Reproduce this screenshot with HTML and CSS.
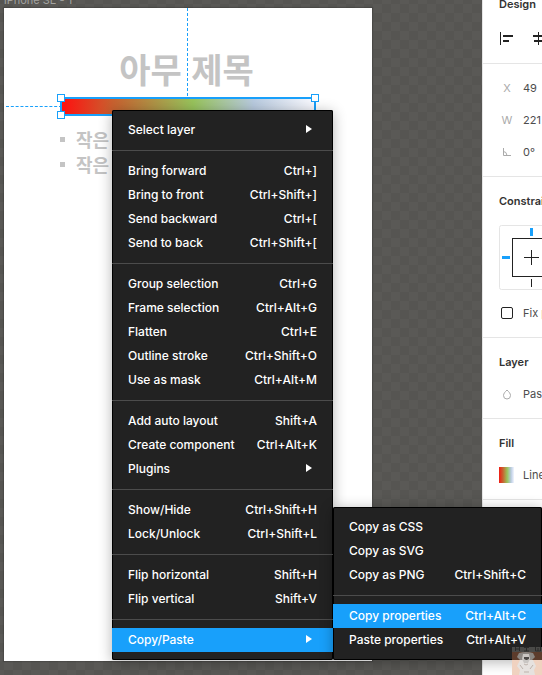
FILE: index.html
```html
<!DOCTYPE html>
<html lang="en">
<head>
<meta charset="utf-8">
<title>Design editor</title>
<link rel="stylesheet" href="styles.css">
</head>
<body>
<div class="app">
  <main class="canvas">
    <div class="frame-label">iPhone SE - 1</div>
    <section class="frame">
      <h1 class="heading" lang="ko">아무 제목</h1>
      <div class="selection">
        <i class="handle handle-tl"></i><i class="handle handle-tr"></i><i class="handle handle-bl"></i>
        <i class="guide-x"></i>
      </div>
      <ul class="notes" lang="ko"><li>작은</li><li>작은</li></ul>
      <i class="guide-y"></i>
    </section>
  </main>
  <aside class="panel">
    <section class="block block-design">
      <h2 class="title">Design</h2>
      <div class="aligns">
        <button class="icon-button" type="button" aria-label="Align left"><svg width="16" height="16" viewBox="0 0 16 16"><path d="M1.5 2v13" stroke="#222" fill="none"/><path d="M4 6h10M4 11h6" stroke="#222" stroke-width="2"/></svg></button>
        <button class="icon-button" type="button" aria-label="Align horizontal centers"><svg width="16" height="16" viewBox="0 0 16 16"><path d="M7.5 2v13" stroke="#222" fill="none"/><path d="M2 6h11M3 11h9" stroke="#222" stroke-width="2"/></svg></button>
      </div>
    </section>
    <section class="block">
      <label class="field"><span class="mark">X</span><input class="value" value="49"></label>
      <label class="field"><span class="mark">W</span><input class="value" value="221"></label>
      <label class="field"><span class="mark"><svg width="10" height="10" viewBox="0 0 10 10" fill="none" stroke="#aaa"><path d="M1.500 1v7.500H9M1.500 4.500q3 0 3.500 4"/></svg></span><input class="value" value="0°" aria-label="Rotation"></label>
    </section>
    <section class="block">
      <h2 class="title">Constraints</h2>
      <svg class="constraints" width="65" height="65" viewBox="0 0 65 65" fill="none"><rect x=".5" y=".5" width="64" height="64" rx="2" stroke="#e5e5e5"/><rect x="13.500" y="13.500" width="38" height="38" stroke="#222"/><path d="M32.500 25v15M25 32.500h15M32.500 54v8M54 32.500h8" stroke="#222"/><path d="M32.500 3v8M3 32.500h8" stroke="#18a0fb" stroke-width="3"/></svg>
      <label class="check"><input class="box" type="checkbox"><span>Fix position when scrolling</span></label>
    </section>
    <section class="block">
      <h2 class="title">Layer</h2>
      <div class="field"><span class="mark"><svg width="10" height="11" viewBox="0 0 10 11" fill="none" stroke="#aaa"><path d="M5 1C3 3 1.500 4.500 1.500 6.500a3.500 3.500 0 0 0 7 0C8.500 4.500 7 3 5 1z"/></svg></span><span>Pass through</span></div>
    </section>
    <section class="block">
      <h2 class="title">Fill</h2>
      <div class="field"><span class="swatch"></span><span>Linear</span></div>
    </section>
  </aside>
</div>
<nav class="menu menu-main" aria-label="Context menu">
  <div class="group"><button class="item" type="button">Select layer<i class="arrow"></i></button></div>
  <div class="group">
    <button class="item" type="button">Bring forward<span>Ctrl+]</span></button>
    <button class="item" type="button">Bring to front<span>Ctrl+Shift+]</span></button>
    <button class="item" type="button">Send backward<span>Ctrl+[</span></button>
    <button class="item" type="button">Send to back<span>Ctrl+Shift+[</span></button>
  </div>
  <div class="group">
    <button class="item" type="button">Group selection<span>Ctrl+G</span></button>
    <button class="item" type="button">Frame selection<span>Ctrl+Alt+G</span></button>
    <button class="item" type="button">Flatten<span>Ctrl+E</span></button>
    <button class="item" type="button">Outline stroke<span>Ctrl+Shift+O</span></button>
    <button class="item" type="button">Use as mask<span>Ctrl+Alt+M</span></button>
  </div>
  <div class="group">
    <button class="item" type="button">Add auto layout<span>Shift+A</span></button>
    <button class="item" type="button">Create component<span>Ctrl+Alt+K</span></button>
    <button class="item" type="button">Plugins<i class="arrow"></i></button>
  </div>
  <div class="group">
    <button class="item" type="button">Show/Hide<span>Ctrl+Shift+H</span></button>
    <button class="item" type="button">Lock/Unlock<span>Ctrl+Shift+L</span></button>
  </div>
  <div class="group">
    <button class="item" type="button">Flip horizontal<span>Shift+H</span></button>
    <button class="item" type="button">Flip vertical<span>Shift+V</span></button>
  </div>
  <div class="group"><button class="item active" type="button">Copy/Paste<i class="arrow"></i></button></div>
  <div class="menu menu-sub">
    <div class="group">
      <button class="item" type="button">Copy as CSS</button>
      <button class="item" type="button">Copy as SVG</button>
      <button class="item" type="button">Copy as PNG<span>Ctrl+Shift+C</span></button>
    </div>
    <div class="group">
      <button class="item active" type="button">Copy properties<span>Ctrl+Alt+C</span></button>
      <button class="item" type="button">Paste properties<span>Ctrl+Alt+V</span></button>
    </div>
  </div>
</nav>
<svg class="stamp" width="30" height="28" viewBox="0 0 30 28">
  <path d="M0 0h30v5H0z" fill="#4a4a48"/>
  <path d="M3.500 0v4M7.500 0v4M3 2h4M12 .5h5M14.500 0v4M12 4h5M23.500 0v4h5V0M26 1v3" stroke="#2a2a29" fill="none"/>
  <path d="M0 5h30v8H0z" fill="#5c3c2c"/>
  <path d="M0 13h30v15H0z" fill="#f0d2c0"/>
  <path d="M7 6q7-2 14 0l2 4-3 3H8l-3-3z" fill="#8a8682"/>
  <path d="M8 13h13l3 6-2 4 1 5H7l1-5-3-4z" fill="#e6e2df"/>
  <path d="M11 7h6l1 5-2 4h-4l-2-4z" fill="#c9c6c3"/>
  <path d="M12 10h5v2l-2 1h-1l-2-1z" fill="#4c4947"/>
  <path d="M12 17q2 2 4 0M8 18l3 4M21 18l-3 4M12 25h5" stroke="#bdb3ac" fill="none"/>
</svg>
</body>
</html>
```
FILE: styles.css
```css
* { box-sizing: border-box; }
body { margin: 0; font-family: Inter, "Noto Sans CJK KR", sans-serif; font-size: 11px; color: #4d4d4d; overflow: hidden; }
button, input { font: inherit; color: inherit; border: 0; background: none; margin: 0; padding: 0; }
h1, h2, ul { margin: 0; padding: 0; }
.app { display: grid; grid-template-columns: 1fr 60px; height: 100vh; }
.canvas { display: flex; flex-direction: column; padding: 0 110px 14px 4px; background: conic-gradient(#5a5956 25%, #565552 0 50%, #5a5956 0 75%, #565552 0) 4px 4px / 18px 18px; }
.frame-label { height: 16px; line-height: 16px; margin-top: -8px; color: #a3a3a0; }
.frame { position: relative; flex: 1; background: #fff; box-shadow: 0 0 1px 1px rgba(0, 0, 0, .15); }
.heading { padding: 36px 3px 0 0; text-align: center; font: 700 34px/50px "Noto Sans CJK KR", sans-serif; color: #c4c4c4; }
.selection { position: relative; height: 19px; margin: 3px 56px 0; border: 2px solid #18a0fb; background: linear-gradient(90deg, #ff1010, #c9602f 20%, #98c45c 52%, #b9cbe0 76%, #fafaff); }
.handle { position: absolute; width: 8px; height: 8px; background: #fff; border: 1px solid #18a0fb; }
.handle-tl { left: -5px; top: -5px; }
.handle-tr { right: -5px; top: -5px; }
.handle-bl { left: -5px; bottom: -5px; }
.guide-x { position: absolute; right: 100%; top: 7px; width: 56px; border-top: 1px dashed #18a0fb; }
.guide-y { position: absolute; right: 50%; top: 0; height: 88px; border-left: 1px dashed #18a0fb; }
.notes { list-style: none; padding: 11px 0 0 56px; font: 700 18px/25px "Noto Sans CJK KR", sans-serif; color: #c4c4c4; }
.notes li { display: flex; align-items: center; gap: 11px; }
.notes li::before { content: ""; width: 5px; height: 5px; background: #c4c4c4; }
.panel { overflow: hidden; white-space: nowrap; background: #fff; border-left: 1px solid #e5e5e5; }
.block { border-bottom: 1px solid #e5e5e5; padding: 8px 0 8px 16px; }
.title { font-size: 11px; font-weight: 600; line-height: 32px; color: #333; }
.block-design { height: 64px; padding-top: 0; }
.block-design .title { line-height: 8px; }
.aligns { display: flex; gap: 16px; margin-top: 22px; }
.icon-button { flex: none; width: 16px; height: 16px; }
.icon-button svg { display: block; }
.field { display: flex; align-items: center; height: 32px; }
.mark { flex: none; width: 16px; margin-right: 8px; text-align: center; color: #aaa; }
.mark svg { display: block; margin: auto; }
.value { width: 48px; }
.constraints { display: block; margin-top: 8px; }
.check { display: flex; align-items: center; gap: 10px; height: 32px; margin-top: 7px; padding-left: 2px; }
.box { appearance: none; flex: none; width: 12px; height: 12px; border: 1px solid #222; border-radius: 2px; }
.swatch { flex: none; width: 15px; height: 16px; margin-right: 9px; background: linear-gradient(90deg, #f01c14, #c9602f 25%, #98c45c 55%, #b9cbe0 80%, #f2f5ff); }
.menu { position: absolute; background: #222; color: #fff; font-size: 12px; font-weight: 500; box-shadow: inset 0 0 0 1px #000, 0 2px 14px rgba(0, 0, 0, .3); border-radius: 2px; }
.menu-main { left: 112px; top: 110px; width: 221px; }
.menu-sub { left: 100%; bottom: 0; width: 209px; }
.group { padding: 8px 0; }
.group + .group { border-top: 1px solid #4c4c4c; }
.item { display: flex; align-items: center; justify-content: space-between; width: 100%; height: 24px; padding: 0 16px 2px; text-align: left; }
.active { background: #18a0fb; }
.arrow { margin-right: 5px; border-left: 6px solid #fff; border-top: 4px solid transparent; border-bottom: 4px solid transparent; }
.stamp { position: absolute; right: 0; bottom: 0; }
```
